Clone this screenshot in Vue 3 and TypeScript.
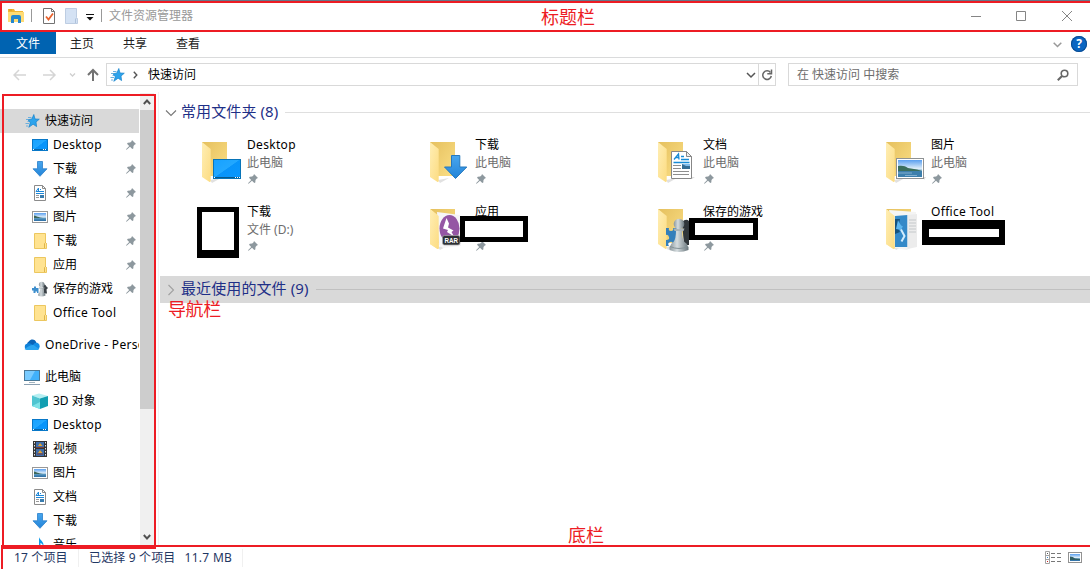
<script setup lang="ts">
interface NavItem {
  label: string
  icon: string
  level: 1 | 2
  pinned?: boolean
  active?: boolean
  spaced?: boolean
}

interface Tile {
  name: string
  sub?: string
  icon?: string
  pinned?: boolean
  mask: string
}

const tabs: string[] = ['主页', '共享', '查看']

const nav: NavItem[] = [
  { label: '快速访问', icon: 'star', level: 1, active: true },
  { label: 'Desktop', icon: 'desktop', level: 2, pinned: true },
  { label: '下载', icon: 'down', level: 2, pinned: true },
  { label: '文档', icon: 'doc', level: 2, pinned: true },
  { label: '图片', icon: 'pic', level: 2, pinned: true },
  { label: '下载', icon: 'folder', level: 2, pinned: true },
  { label: '应用', icon: 'folder', level: 2, pinned: true },
  { label: '保存的游戏', icon: 'games', level: 2, pinned: true },
  { label: 'Office Tool', icon: 'folder', level: 2 },
  { label: 'OneDrive - Personal', icon: 'cloud', level: 1, spaced: true },
  { label: '此电脑', icon: 'pc', level: 1, spaced: true },
  { label: '3D 对象', icon: 'cube', level: 2 },
  { label: 'Desktop', icon: 'desktop', level: 2 },
  { label: '视频', icon: 'video', level: 2 },
  { label: '图片', icon: 'pic', level: 2 },
  { label: '文档', icon: 'doc', level: 2 },
  { label: '下载', icon: 'down', level: 2 },
  { label: '音乐', icon: 'music', level: 2 },
]

const tiles: Tile[] = [
  { name: 'Desktop', sub: '此电脑', icon: 'b-desktop', pinned: true, mask: '' },
  { name: '下载', sub: '此电脑', icon: 'b-down', pinned: true, mask: '' },
  { name: '文档', sub: '此电脑', icon: 'b-doc', pinned: true, mask: '' },
  { name: '图片', sub: '此电脑', icon: 'b-pic', pinned: true, mask: '' },
  { name: '下载', sub: '文件 (D:)', pinned: true, mask: 'mask-icon' },
  { name: '应用', icon: 'b-rar', pinned: true, mask: 'mask-app' },
  { name: '保存的游戏', icon: 'b-games', pinned: true, mask: 'mask-game' },
  { name: 'Office Tool', icon: 'b-office', mask: 'mask-office' },
]

const isLatin = (s: string): boolean => /^[\x20-\x7e]+$/.test(s)
</script>

<template>
  <div class="window">
    <svg class="defs" width="0" height="0" aria-hidden="true">
      <defs>
        <linearGradient id="gBack" x1="0" y1="0" x2="1" y2="1">
          <stop offset="0" stop-color="#e5c05e" /><stop offset="1" stop-color="#fbdf86" />
        </linearGradient>
        <linearGradient id="gFlap" x1="0" y1="0" x2="1" y2="1">
          <stop offset="0" stop-color="#ffeeb4" /><stop offset="1" stop-color="#fcdc82" />
        </linearGradient>
        <linearGradient id="gScreen" x1="0" y1="0" x2="1" y2="1">
          <stop offset="0" stop-color="#16a1ff" /><stop offset=".48" stop-color="#22a8ff" />
          <stop offset=".5" stop-color="#0894fa" /><stop offset="1" stop-color="#0a97fd" />
        </linearGradient>
        <linearGradient id="gDown" x1="0" y1="0" x2="0" y2="1">
          <stop offset="0" stop-color="#48a6ee" /><stop offset="1" stop-color="#2384d8" />
        </linearGradient>
        <linearGradient id="gSky" x1="0" y1="0" x2="0" y2="1">
          <stop offset="0" stop-color="#5a9ff0" /><stop offset=".5" stop-color="#dcecf8" />
          <stop offset=".7" stop-color="#4f8fb8" /><stop offset="1" stop-color="#2d6ea6" />
        </linearGradient>
        <linearGradient id="gPawn" x1="0" y1="0" x2="1" y2="0">
          <stop offset="0" stop-color="#8b969b" /><stop offset=".4" stop-color="#d5dcdf" />
          <stop offset="1" stop-color="#68757b" />
        </linearGradient>
      </defs>
      <symbol id="star" viewBox="0 0 16 16">
        <path d="M9.800 1.500 11 6 15.300 6.200 12 9 12.600 13.600 9.100 11.200 4.800 14.300 6.300 9.800 4 6.700 7.900 6Z" fill="#2da3ec" stroke="#1583cc" stroke-width=".7" />
        <path d="M4 4.500h3.500M2 6.500h2.500M3.500 8.500H5M1.500 10.500H5M2 13h2" stroke="#5ea9dc" stroke-width=".9" />
      </symbol>
      <symbol id="desktop" viewBox="0 0 16 16">
        <rect x=".5" y="2.500" width="15" height="11" fill="url(#gScreen)" stroke="#0878c8" />
        <path d="M1 12.500h14" stroke="#0669ae" /><path d="M1 12.500h1M11 12.500h1M13 12.500h1" stroke="#fff" />
      </symbol>
      <symbol id="down" viewBox="0 0 16 16">
        <path d="M5.500.5h5v7.300H15L8 15.300 1 7.800h4.500Z" fill="url(#gDown)" stroke="#2a7fca" stroke-width=".8" />
      </symbol>
      <symbol id="doc" viewBox="0 0 16 16">
        <path d="M2.500.5h8l3 3v12h-11Z" fill="#fff" stroke="#8b8b8b" /><path d="M10.500.5v3h3" fill="none" stroke="#8b8b8b" />
        <path d="M4 6.500 6.500 3v3.500M8 4.500h1M4 6.500h8M4 8.500h8" fill="none" stroke="#1d87d8" />
        <path d="M4 10.500h3M4 12.500h3" stroke="#9a9a9a" /><rect x="8" y="10" width="4" height="3" fill="#397cae" />
      </symbol>
      <symbol id="pic" viewBox="0 0 16 16">
        <rect x=".5" y="2.500" width="15" height="11" fill="#fff" stroke="#989898" />
        <rect x="2" y="4" width="12" height="8" fill="url(#gSky)" />
        <path d="M2 6.500c3 .5 4 2 9 2.500H2Z" fill="#3d675a" />
      </symbol>
      <symbol id="folder" viewBox="0 0 16 16">
        <path d="M2.500.5h11v9l1 1v5h-12Z" fill="#ffe391" stroke="#ecc75f" />
        <path d="M12.500 15v-4.500l1-1 1 1" fill="none" stroke="#dfb54a" />
      </symbol>
      <symbol id="games" viewBox="0 0 16 16">
        <path d="M0 7h2V5.500h2V7h2.500v5H5v-1.500H3.500V12H1.500V9.500H0Z" fill="#3f8fcd" />
        <path d="M11 4.500c1-2 3-.5 3 .5l2 2-1.500 1.500.5 4h-3Z" fill="#3b4247" />
        <path d="M6 14.500q0-2 1.500-3l1-4.500h2.500l1 4.500q1.500 1 1.500 3-4 1.800-7.500 0Z" fill="url(#gPawn)" />
        <path d="M7 6.500h5.500v1H7Z" fill="#a3adb1" /><circle cx="9.700" cy="3.500" r="2.800" fill="url(#gPawn)" />
      </symbol>
      <symbol id="cloud" viewBox="0 0 16 16">
        <path d="M3 8A4 4 0 0 1 5 4.300C7 1.500 11.500 2 12.500 6L9 10Z" fill="#0a64b8" />
        <path d="M3.500 13A3.300 3.300 0 0 1 3.500 6.500C6 5.500 7 7 13 10Z" fill="#1081d8" />
        <path d="M9 8c1.500-3 5-3 6.200-.5q1.500 3.500-1.700 5.500H8Z" fill="#138ee6" />
        <path d="M3.500 13c-2 0-3-1-3-1C4 9.500 7 7.500 9.500 8l5.500 4c-.5 1-1.500 1-2 1Z" fill="#2ba5f0" />
      </symbol>
      <symbol id="pc" viewBox="0 0 16 16">
        <rect x=".5" y="1.500" width="15" height="10" fill="#41b1fb" stroke="#4a7896" />
        <path d="M1 2h10L6 11H1Z" fill="#79cbff" /><path d="M5 13.500h6" stroke="#a2b4c0" /><path d="M0 15.500h16" stroke="#8ba0b2" />
      </symbol>
      <symbol id="cube" viewBox="0 0 16 16">
        <path d="M0 2.500 7 .5l9 2.500-8 2.500Z" fill="#b5eff2" /><path d="M0 2.500 8 5.500V16l-8-3Z" fill="#4fc5d1" />
        <path d="M8 5.500 16 3v10l-8 3Z" fill="#119eb1" /><path d="M0 13 8 9v7Z" fill="#7ee2e7" />
      </symbol>
      <symbol id="video" viewBox="0 0 16 16">
        <path d="M1 0h14v16H1Z" fill="#343434" /><path d="M2.500 1v15M13.500 1v15" stroke="#e6e6e6" stroke-dasharray="1.500 1.500" />
        <path d="M4 1h8v6H4ZM4 8h8v7H4Z" fill="#3f6eac" /><path d="M6 5 8 2l2.500 3ZM6 12l2-3 2.500 3Z" fill="#e2a331" />
        <path d="M4 6.500h8M5 13h6" stroke="#7c3d39" />
      </symbol>
      <symbol id="music" viewBox="0 0 16 16">
        <path d="M7 0c.5 3 5 4 4.500 9C10 6.500 9 6 8.500 6v7A3 2.500 0 1 1 7 11Z" fill="#109ae9" />
      </symbol>
      <symbol id="pin" viewBox="0 0 10 10">
        <path d="M6 0 10 4 8.800 4.600 7.500 6 7.300 8.500 6.300 9 4 6.700 .6 9.800 0 9.300 3.200 6 1 3.700 1.800 2.700 4.200 2.600 5.600 1.200Z" fill="#8d989e" />
      </symbol>
      <symbol id="b-folder" viewBox="0 0 48 48">
        <path d="M14 41 25 39 16 44Z" fill="#e1e1e1" />
        <path d="M6 3h25v34H14L6 33Z" fill="url(#gBack)" />
        <path d="M6 3 14.700 10v32q-.2 1.500-1.500.8L6 38Z" fill="url(#gFlap)" />
      </symbol>
      <symbol id="b-desktop" viewBox="0 0 48 48">
        <use href="#b-folder" />
        <rect x="17.500" y="20.500" width="27" height="19" fill="url(#gScreen)" stroke="#0874b8" />
        <path d="M18 38.500h26" stroke="#07598c" /><path d="M18 38.500h1M39 38.500h1M41 38.500h1M43 38.500h1" stroke="#fff" />
      </symbol>
      <symbol id="b-down" viewBox="0 0 48 48">
        <use href="#b-folder" />
        <path d="M27.500 16.500h8.300V28H42.800L31.500 39.500 20.500 28h7Z" fill="url(#gDown)" stroke="#2578bd" />
      </symbol>
      <symbol id="b-doc" viewBox="0 0 48 48">
        <use href="#b-folder" /><path d="M38 38h5l-3 2Z" fill="#ddd" />
        <path d="M19.500 12.500h15l5 5v22h-20Z" fill="#fff" stroke="#878787" /><path d="M34.500 12.500v5h5Z" fill="#eee" stroke="#878787" />
        <path d="M22 20.500 26.500 15l.5 5.500M24 18.500h3M29 17.500h3M29 20.500h8M21.500 23.500h16" fill="none" stroke="#178bd5" stroke-width="1.300" />
        <path d="M21 26.500h8M21 29.500h8M21 32.500h16M21 35.500h16" stroke="#8e8e8e" />
        <rect x="30" y="25" width="8" height="5" fill="#356d94" /><path d="M30 25h8v2h-4Z" fill="#81bceb" />
      </symbol>
      <symbol id="b-pic" viewBox="0 0 48 48">
        <use href="#b-folder" /><path d="M44 38h2l-2 3Z" fill="#ddd" />
        <rect x="16.500" y="19.500" width="27" height="20" fill="#fff" stroke="#8e9294" />
        <rect x="18" y="21" width="24" height="17" fill="url(#gSky)" />
        <path d="M18 27c5-.5 7 0 10 2l9 1.500 5 1.500H18Z" fill="#3b6e5c" /><path d="M18 32h24v6H18Z" fill="#3d7fac" />
        <path d="M18 34h14M25 36.500h12" stroke="#82afd0" />
      </symbol>
      <symbol id="b-rar" viewBox="0 0 48 48">
        <use href="#b-folder" />
        <path d="M13 6 36 9l1 31-18 2-4-3Z" fill="#f6f5f7" />
        <ellipse cx="25.500" cy="22.500" rx="10" ry="13.500" fill="#9556a4" />
        <path d="m22.500 12-3.500 10.500 5 1.500-1 2 7 4.500-2.500-4.500 2-1.500-5.500-3 1-4Z" fill="#fff" />
        <rect x="18.500" y="29.500" width="17.500" height="9.500" rx="2" fill="#2d3033" stroke="#aaa" stroke-width=".7" />
        <text x="20.500" y="37" class="rar" textLength="13.500" lengthAdjust="spacingAndGlyphs">RAR</text>
        <path d="M6 3 14.700 10v32q-.2 1.500-1.500.8L6 38Z" fill="url(#gFlap)" />
      </symbol>
      <symbol id="b-games" viewBox="0 0 48 48">
        <use href="#b-folder" />
        <path d="M14 22h3q-1 3 2 3t2-3h5v17h-5q0-4-3-3t-1 4h-3v-6q4 0 3-3t-3-2Z" fill="#347fbb" />
        <path d="M30 16q4-4 7-1v24h-5Z" fill="#30363a" />
        <path d="M24 24h6q0 9 2.500 12 3 1.500 3 3.500l1 1.500v3q-9.500 4-19 0v-3l1-1.500q0-2 3-3.500 2.500-3 2.500-12Z" fill="url(#gPawn)" />
        <path d="M21.500 22.500h11l-1 2.500h-9Z" fill="#a9b3b7" />
        <circle cx="27" cy="18" r="5.300" fill="url(#gPawn)" />
        <path d="M18 40.500q9 4 18 0" fill="none" stroke="#839196" />
      </symbol>
      <symbol id="b-office" viewBox="0 0 48 48">
        <use href="#b-folder" />
        <path d="M9 4 36 6v32l-9 6-12-2Z" fill="#f5f5f4" />
        <path d="M15 10 27.500 9v32L15 41Z" fill="#3489c8" /><path d="M15 13h5l-2 9 2 4-5 2Z" fill="#15527e" />
        <path d="M18 14q3 7 5 6l-2 4-5-1Z" fill="#5db6ef" /><path d="M21 23.500 24.500 30 21.500 35.500" fill="none" stroke="#d2edff" stroke-width="2" />
        <path d="M27.500 9 37 8v33l-9.500 2Z" fill="#ececec" /><path d="M29 14h7M29 17h7M29 20h7M29 23h7M29 26h7" stroke="#c4c7c9" stroke-width="1.200" />
        <path d="M6 3 14.700 10v32q-.2 1.500-1.500.8L6 38Z" fill="url(#gFlap)" />
      </symbol>
    </svg>

    <header class="titlebar">
      <svg class="app-icon" viewBox="0 0 18 16" width="18" height="16">
        <path d="M1 1h6l1 2h8v11H1Z" fill="#f2b632" /><path d="M1 4h16v10H1Z" fill="#ffdc75" />
        <path d="M4 15V9q0-2 2-2h6q2 0 2 2v6h-3v-4H7v4Z" fill="#2487cf" /><path d="M2 2h3" stroke="#d39620" />
      </svg>
      <i class="sep"></i>
      <svg class="check" viewBox="0 0 12 16" width="12" height="16">
        <path d="M.5.5h8l3 3v12H.5Z" fill="#fff" stroke="#727272" /><path d="M8.500.5v3h3" fill="none" stroke="#727272" />
        <path d="m3 8.500 2.500 3L10 5.500" fill="none" stroke="#e8622d" stroke-width="1.800" />
      </svg>
      <svg class="blank" viewBox="0 0 13 16" width="13" height="16">
        <path d="M.5.5h11v9l1 1v5H.5Z" fill="#d4e2f4" stroke="#bdcde2" /><path d="M10.500 15v-4l1-1" fill="none" stroke="#afc2db" />
      </svg>
      <svg class="more" viewBox="0 0 8 8" width="8" height="8"><path d="M0 1.500h8" stroke="#111" /><path d="M.5 4h7L4 7.500Z" fill="#111" /></svg>
      <i class="sep"></i>
      <span class="title">文件资源管理器</span>
      <svg class="controls" viewBox="0 0 102 12" width="102" height="12" fill="none" stroke="#858585">
        <path d="M0 6.500h10M45.500 1.500h9v9h-9ZM91 1l10 10M101 1 91 11" />
      </svg>
    </header>

    <nav class="ribbon">
      <span class="file-tab">文件</span>
      <span v-for="t in tabs" :key="t" class="tab">{{ t }}</span>
      <svg class="chev" viewBox="0 0 9 6" width="9" height="6"><path d="M.7.700 4.500 4.500 8.300.7" fill="none" stroke="#999" stroke-width="1.500" /></svg>
      <span class="help">?</span>
    </nav>

    <div class="address-row">
      <svg class="arrows" viewBox="0 0 88 14" width="88" height="14" fill="none">
        <path d="M13 7H1M6 2 1 7l5 5M30 7h12M37 2l5 5-5 5" stroke="#d5d5d5" stroke-width="1.500" />
        <path d="m57 5.500 2.500 2.500L62 5.500" stroke="#cfcfcf" stroke-width="1.300" />
        <path d="M80 13V2M75 7l5-5 5 5" stroke="#727272" stroke-width="2" />
      </svg>
      <div class="address">
        <svg class="addr-star" width="16" height="16"><use href="#star" /></svg>
        <svg class="addr-chev" viewBox="0 0 5 8" width="5" height="8"><path d="m.8.800 3 3.200-3 3.200" fill="none" stroke="#555" stroke-width="1.400" /></svg>
        <span class="path">快速访问</span>
        <svg class="drop" viewBox="0 0 10 7" width="10" height="7"><path d="m1 1 4 4 4-4" fill="none" stroke="#555" stroke-width="1.500" /></svg>
        <div class="refresh">
          <svg viewBox="0 0 12 12" width="12" height="12"><path d="M9.500 3.500A4.300 4.300 0 1 0 10.300 7" fill="none" stroke="#666" stroke-width="1.500" /><path d="M10.500.5v4.300H6.300" fill="none" stroke="#666" stroke-width="1.500" /></svg>
        </div>
      </div>
      <div class="search">
        <span>在 快速访问 中搜索</span>
        <svg viewBox="0 0 12 12" width="12" height="12" fill="none" stroke="#666"><circle cx="7.500" cy="4.500" r="3.300" stroke-width="1.600" /><path d="M5 7 .8 11.200" stroke-width="2" /></svg>
      </div>
    </div>

    <div class="body">
      <aside class="side">
        <div class="tree">
          <div v-for="(n, i) in nav" :key="i" class="node" :class="{ deep: n.level === 2, active: n.active, spaced: n.spaced }">
            <svg class="node-icon" width="16" height="16"><use :href="'#' + n.icon" /></svg>
            <span class="node-label" :class="{ latin: isLatin(n.label) }">{{ n.label }}</span>
            <svg v-if="n.pinned" class="node-pin" width="10" height="10"><use href="#pin" /></svg>
          </div>
        </div>
        <div class="scroll">
          <div class="scroll-btn"><svg viewBox="0 0 8 6" width="8" height="6"><path d="M.8 5 4 1.500 7.200 5" fill="none" stroke="#505050" stroke-width="1.900" /></svg></div>
          <div class="thumb"></div>
          <div class="scroll-btn end"><svg viewBox="0 0 8 6" width="8" height="6"><path d="M.8 1 4 4.500 7.200 1" fill="none" stroke="#505050" stroke-width="1.900" /></svg></div>
        </div>
      </aside>

      <main class="content">
        <div class="group">
          <svg class="g-chev" viewBox="0 0 12 12" width="12" height="12"><path d="m1 3.500 5 5 5-5" fill="none" stroke="#777" stroke-width="1.100" /></svg>
          <span class="g-name">常用文件夹 (8)</span>
          <i class="rule"></i>
        </div>
        <div class="tiles">
          <div v-for="(t, i) in tiles" :key="i" class="tile">
            <svg class="tile-icon" width="48" height="48"><use v-if="t.icon" :href="'#' + t.icon" /></svg>
            <div class="tile-text">
              <span class="name" :class="{ latin: isLatin(t.name) }">{{ t.name }}</span>
              <span class="sub">{{ t.sub }}</span>
              <svg v-if="t.pinned" class="tile-pin" width="10" height="10"><use href="#pin" /></svg>
            </div>
            <i v-if="t.mask" class="mask" :class="t.mask"></i>
          </div>
        </div>
        <div class="group selected">
          <svg class="g-chev" viewBox="0 0 12 12" width="12" height="12"><path d="m3.500 1 5 5-5 5" fill="none" stroke="#a0a0a0" stroke-width="1.100" /></svg>
          <span class="g-name">最近使用的文件 (9)</span>
          <i class="rule"></i>
        </div>
      </main>
    </div>

    <footer class="status">
      <span class="s-count">17 个项目</span>
      <span class="s-sel">已选择 9 个项目</span>
      <span class="s-size">11.7 MB</span>
      <svg class="views" viewBox="0 0 38 14" width="38" height="14" fill="none">
        <path d="M.5.5h4v12h-4ZM.5 4.500h4M.5 8.500h4" stroke="#a2a2a2" />
        <path d="M2 2.500h1" stroke="#555" /><path d="M2 6.500h1" stroke="#3c83ca" /><path d="M2 10.500h1" stroke="#d02222" />
        <path d="M6 2.500h4M12 2.500h4M6 6.500h4M12 6.500h4M6 10.500h4M12 10.500h4" stroke="#777" />
        <rect x="23.500" y="1.500" width="13" height="10" stroke="#929292" /><rect x="25" y="3" width="10" height="7" fill="url(#gSky)" />
        <path d="M25 5.500q3 0 5 2l5 .5v1H25Z" fill="#315e64" />
      </svg>
    </footer>

    <div class="frame frame-title"></div>
    <div class="frame frame-side"></div>
    <div class="frame frame-status"></div>
    <span class="note note-title">标题栏</span>
    <span class="note note-nav">导航栏</span>
    <span class="note note-bottom">底栏</span>
  </div>
</template>

<style>
html, body { margin: 0; overflow: hidden; }
</style>

<style scoped>
.window {
  position: relative;
  display: flex;
  flex-direction: column;
  width: 1090px;
  height: 569px;
  overflow: hidden;
  background: #fff;
  color: #000;
  font: 12px/18px "Noto Sans", "Noto Sans CJK SC", sans-serif;
  white-space: nowrap;
}
.window *, .window { box-sizing: border-box; }
.defs { position: absolute; }
svg { display: block; flex: none; }
.latin { letter-spacing: .32px; }
.titlebar {
  display: flex;
  align-items: center;
  flex: none;
  height: 32px;
  padding: 0 17px 2px 7px;
  border-top: 1px solid #66798a;
}
.sep { width: 1px; height: 13px; background: #999; }
.app-icon { margin-right: 6px; }
.check { margin-left: 11px; }
.blank { margin-left: 10px; }
.more { margin: 3px 7px 0 8px; }
.title { margin-left: 7px; color: #999; }
.controls { margin-left: auto; }
.ribbon {
  display: flex;
  flex: none;
  height: 26px;
  border-bottom: 1px solid #dadbdc;
  line-height: 23px;
}
.file-tab { width: 56px; height: 22px; margin-right: 14px; background: #0063b1; color: #fff; text-align: center; line-height: 23px; }
.tab { width: 24px; margin-right: 29px; color: #222; }
.chev { margin: 10px 9px 0 auto; }
.help {
  width: 16px;
  height: 16px;
  margin: 4px 3px 0 0;
  border-radius: 50%;
  background: #0a66c2;
  box-shadow: inset 0 0 0 1px #0b4c91;
  color: #fff;
  font-weight: 700;
  line-height: 16px;
  text-align: center;
}
.address-row { display: flex; flex: none; height: 34px; padding: 5px 12px 0; }
.arrows { margin: 5px 6px 0 1px; }
.address { display: flex; align-items: center; width: 670px; height: 23px; margin-left: -1px; border: 1px solid #d9d9d9; }
.addr-star { margin-left: 2px; }
.addr-chev { margin-left: 8px; }
.path { margin-left: 10px; }
.drop { margin: 1px 2px 0 auto; }
.refresh { display: flex; align-items: center; justify-content: center; width: 17px; height: 21px; border-left: 1px solid #d9d9d9; }
.search {
  display: flex;
  align-items: center;
  justify-content: space-between;
  width: 290px;
  height: 23px;
  margin-left: 12px;
  padding: 0 8px;
  border: 1px solid #d9d9d9;
  color: #6d6d6d;
}
.body { display: flex; flex: none; height: 453px; }
.side { display: flex; flex: none; width: 159px; padding-top: 1px; border-right: 1px solid #f2f2f2; }
.tree { flex: none; width: 139px; height: 452px; margin-right: 1px; padding-top: 16px; overflow: hidden; }
.node { display: flex; align-items: center; height: 24px; padding-left: 24px; }
.node.deep { padding-left: 32px; }
.node.active { background: #d9d9d9; }
.node.spaced { margin-top: 8px; }
.node-label { margin-left: 5px; overflow: hidden; }
.node-pin { margin: 0 3px 1px auto; }
.scroll { display: flex; flex-direction: column; width: 14px; background: #f0f0f0; }
.scroll-btn { display: flex; align-items: center; justify-content: center; height: 17px; background: #f0f0f0; }
.scroll-btn.end { margin-top: auto; }
.thumb { height: 299px; background: #cdcdcd; }
.content { flex: 1; min-width: 0; padding: 7px 0 0 1px; }
.group { display: flex; align-items: center; height: 27px; padding-left: 5px; color: #1e2f87; font-size: 15px; line-height: 24px; }
.g-chev { margin-right: 4px; }
.g-name { margin-top: -4px; letter-spacing: .1px; }
.rule { flex: 1; height: 1px; margin-left: 7px; background: #dfdfdf; }
.selected { background: #d9d9d9; }
.selected .rule { background: #c0c0c0; }
.tiles { display: grid; grid-template-columns: repeat(4, 228px); grid-auto-rows: 67px; height: 150px; padding: 13px 0 0 36px; }
.tile { position: relative; display: flex; }
.tile-text { display: flex; flex-direction: column; margin: -3px 0 0 3px; }
.name, .sub { height: 18px; }
.sub { color: #6d6d6d; }
.tile-pin { margin: 2px 0 0 1px; }
.rar { fill: #fff; font: bold 7.500px "Liberation Sans", sans-serif; }
.mask { position: absolute; background: #fff; border: 5px solid #000; }
.mask-icon { left: 1px; top: 1px; width: 42px; height: 51px; border-bottom-width: 8px; }
.mask-app { left: 36px; top: 10px; width: 68px; height: 26px; }
.mask-game { left: 37px; top: 12px; width: 69px; height: 22px; border-left-width: 6px; }
.mask-office { left: 42px; top: 14px; width: 83px; height: 25px; border-width: 9px 6px 8px 7px; }
.status { display: flex; align-items: center; flex: none; height: 24px; padding: 2px 7px 0 14px; color: #1f3763; letter-spacing: .15px; }
.s-count { width: 65px; border-right: 1px solid #f0f0f0; }
.s-sel { margin-left: 10px; }
.s-size { margin-left: 9px; padding-right: 10px; border-right: 1px solid #f0f0f0; letter-spacing: .3px; }
.views { margin: 0 0 1px auto; }
.frame { position: absolute; border: 2px solid #ed1c24; pointer-events: none; }
.frame-title { left: 0; top: 1px; width: 1094px; height: 31px; }
.frame-side { left: 2px; top: 94px; width: 154px; height: 455px; }
.frame-status { left: 1px; top: 545px; width: 1094px; height: 30px; }
.note { position: absolute; color: #ed1c24; font-size: 18px; line-height: 24px; }
.note-title { left: 541px; top: 5px; }
.note-nav { left: 168px; top: 297px; letter-spacing: -.4px; }
.note-bottom { left: 568px; top: 523px; }
</style>
